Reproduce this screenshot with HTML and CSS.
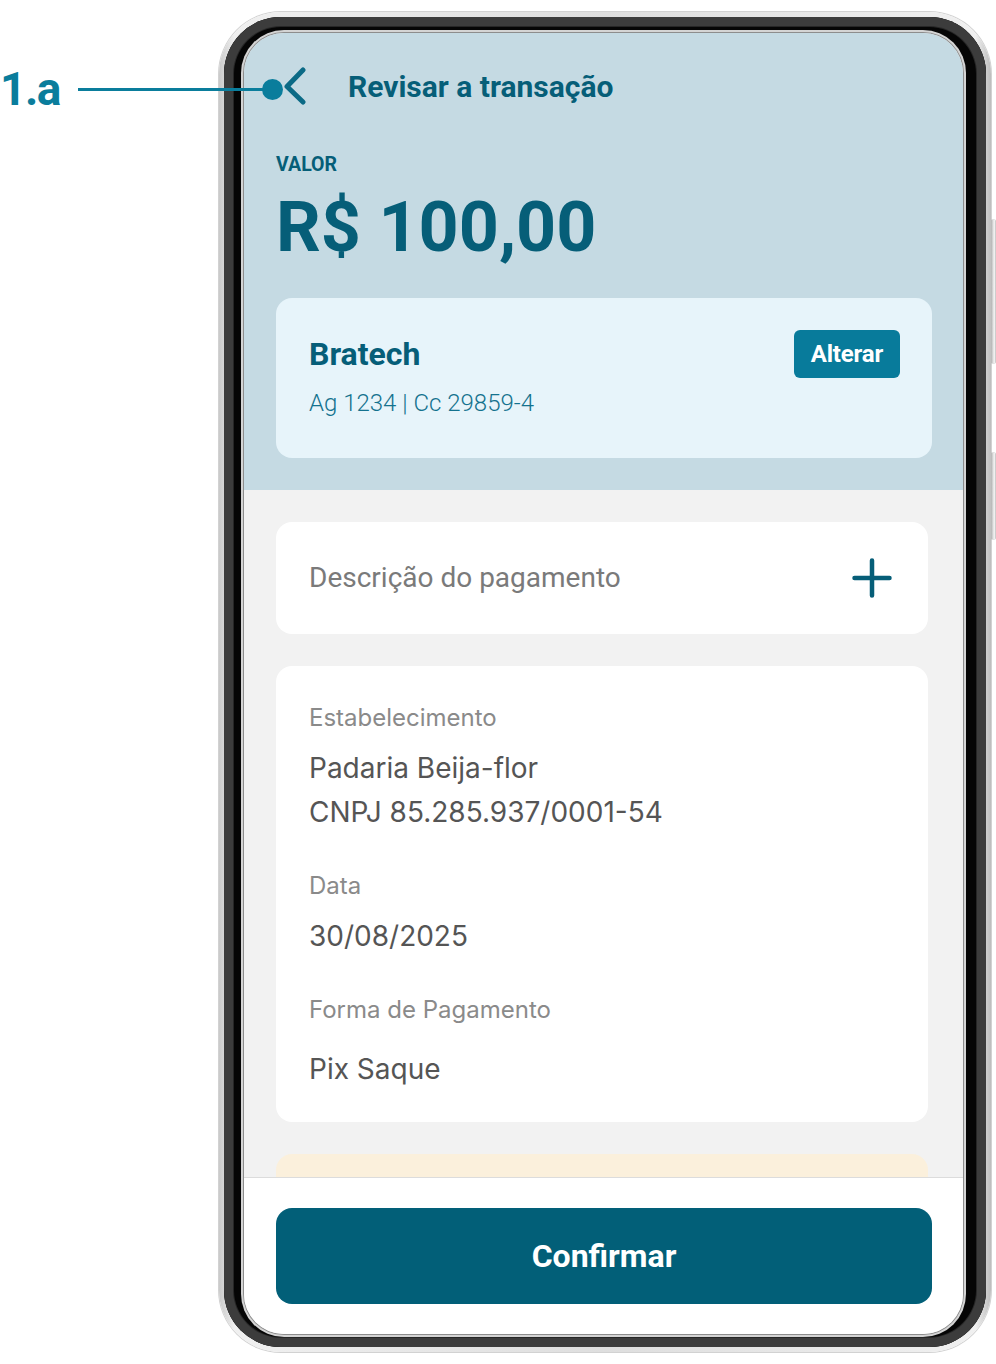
FILE: index.html
```html
<!DOCTYPE html>
<html lang="pt-BR">
<head>
<meta charset="utf-8">
<title>Revisar a transação</title>
<link rel="stylesheet" href="styles.css">
</head>
<body>
<div class="canvas">
  <div class="callout">
    <span class="callout-label">1.a</span>
    <span class="callout-line"></span>
    <span class="callout-dot"></span>
  </div>
  <div class="phone">
    <span class="side-btn side-btn--top"></span>
    <span class="side-btn side-btn--bottom"></span>
    <div class="bezel">
      <div class="screen">
        <header class="hero">
          <div class="nav">
            <button class="back" aria-label="Voltar">
              <svg width="40" height="40" viewBox="0 0 40 40"><path d="M27 3 L11 19.5 L27 35" fill="none" stroke="#0b6a86" stroke-width="5" stroke-linecap="round" stroke-linejoin="round"/></svg>
            </button>
            <h1 class="nav-title">Revisar a transação</h1>
          </div>
          <div class="amount-label">VALOR</div>
          <div class="amount">R$ 100,00</div>
          <div class="account-card">
            <div class="account-row">
              <div class="account-name">Bratech</div>
              <button class="btn-alter">Alterar</button>
            </div>
            <div class="account-info">Ag 1234 | Cc 29859-4</div>
          </div>
        </header>
        <main class="content">
          <div class="desc-card">
            <span class="desc-text">Descrição do pagamento</span>
            <svg class="plus" width="40" height="40" viewBox="0 0 40 40"><path d="M20 2.5 V37.5 M2.5 20 H37.5" fill="none" stroke="#065e78" stroke-width="4.5" stroke-linecap="round"/></svg>
          </div>
          <div class="info-card">
            <div class="field">
              <div class="field-label">Estabelecimento</div>
              <div class="field-value">Padaria Beija-flor<br>CNPJ 85.285.937/0001-54</div>
            </div>
            <div class="field">
              <div class="field-label">Data</div>
              <div class="field-value">30/08/2025</div>
            </div>
            <div class="field field--last">
              <div class="field-label">Forma de Pagamento</div>
              <div class="field-value">Pix Saque</div>
            </div>
          </div>
          <div class="notice-card"></div>
        </main>
        <footer class="footer">
          <button class="btn-confirm">Confirmar</button>
        </footer>
      </div>
    </div>
  </div>
</div>
</body>
</html>
```
FILE: styles.css
```css
* { box-sizing: border-box; }
html, body { margin: 0; padding: 0; background: #ffffff; }
body { width: 996px; height: 1364px; overflow: hidden; font-family: Roboto, "Liberation Sans", sans-serif; }

.canvas { position: relative; width: 996px; height: 1364px; padding: 12px 0 0 219px; }

/* callout annotation */
.callout {
  position: absolute; left: 0; top: 66px; z-index: 5;
  display: flex; align-items: center; height: 46px;
}
.callout-label {
  font-family: Roboto, sans-serif; font-weight: 700; font-size: 46px; line-height: 46px;
  color: #0a7d9c; letter-spacing: -1.5px; width: 78px;
}
.callout-line { width: 186px; height: 3px; background: #0a7d9c; }
.callout-dot { width: 21px; height: 21px; border-radius: 50%; background: #0a7d9c; margin-left: -2px; }

/* phone frame */
.phone {
  position: relative; width: 772px; height: 1340px; padding: 5px;
  border-radius: 62px;
  background: linear-gradient(90deg, #c9c9c9 0%, #f0f0f0 2%, #dedede 50%, #f0f0f0 98%, #bdbdbd 100%);
  box-shadow: 0 0 0 1px #d2d2d2;
}
.side-btn {
  position: absolute; right: -6px; width: 6px; border-radius: 0 3px 3px 0;
  background: linear-gradient(90deg, #b0b0b0, #f6f6f6 55%, #9a9a9a);
  box-shadow: 0 0 0 0.5px #c4c4c4;
}
.side-btn--top { top: 208px; height: 143px; }
.side-btn--bottom { top: 441px; height: 86px; }

.bezel {
  height: 100%; border-radius: 57px; background: #050505;
  padding: 16px 23px 13px 20px;
  box-shadow: inset 0 0 0 9px #3c3c3c, inset 0 0 0 10px #262626;
}
.screen {
  width: 719px; height: 1301px; border-radius: 40px; overflow: hidden;
  display: flex; flex-direction: column; background: #f2f2f2;
  box-shadow: 0 0 0 1px #8d8d8d, 0 0 0 3px #d4d4d4;
}

/* hero */
.hero { flex: none; background: #c5dae3; padding: 34px 31px 32px 32px; }
.nav { display: flex; align-items: center; height: 40px; gap: 32px; }
.back { width: 40px; height: 40px; padding: 0; border: 0; background: none; display: block; }
.back svg { display: block; }
.nav-title { margin: 0; font-size: 30px; line-height: 40px; font-weight: 700; color: #065e78; }
.amount-label { margin-top: 46px; font-size: 19.5px; line-height: 24px; font-weight: 700; color: #065e78; }
.amount { margin-top: 10px; font-size: 70px; line-height: 80px; font-weight: 700; color: #065e78; }

.account-card {
  margin-top: 31px; height: 160px; border-radius: 16px; background: #e7f4fa;
  padding: 32px 32px 0 33px;
}
.account-row { display: flex; align-items: center; justify-content: space-between; height: 48px; }
.account-name { font-size: 32px; font-weight: 700; color: #065e78; line-height: 40px; }
.btn-alter {
  height: 48px; padding: 0 17px; border: 0; border-radius: 6px; background: #087b9b;
  color: #ffffff; font-family: Roboto, sans-serif; font-weight: 700; font-size: 24px; letter-spacing: -0.2px;
}
.account-info { margin-top: 11px; font-size: 24px; line-height: 28px; font-weight: 300; color: #14728e; }

/* content */
.content {
  flex: 1; min-height: 0; overflow: hidden;
  padding: 32px 35px 0 32px;
  display: flex; flex-direction: column; gap: 32px;
}
.desc-card {
  flex: none; height: 112px; border-radius: 16px; background: #ffffff;
  display: flex; align-items: center; justify-content: space-between;
  padding: 0 36px 0 33px;
}
.desc-text { font-size: 28px; color: #7a7a7a; line-height: 36px; }
.plus { display: block; }

.info-card {
  flex: none; height: 456px; border-radius: 16px; background: #ffffff;
  padding: 36px 33px 0 33px;
  display: flex; flex-direction: column; gap: 36px;
  font-family: Inter, "Noto Sans", sans-serif;
}
.field-label { font-size: 24px; line-height: 32px; color: #8a8a8a; }
.field-value { margin-top: 12px; font-size: 28px; line-height: 44px; color: #555555; }
.field--last .field-value { margin-top: 21px; }

.notice-card { flex: none; height: 60px; border-radius: 16px; background: #fbf0dc; }

/* footer */
.footer { flex: none; background: #ffffff; border-top: 1px solid #dcdcdc; padding: 30px 31px 30px 32px; }
.btn-confirm {
  display: block; width: 100%; height: 96px; border: 0; border-radius: 16px;
  background: #025f78; color: #ffffff;
  font-family: Roboto, sans-serif; font-weight: 700; font-size: 32px;
}
```
